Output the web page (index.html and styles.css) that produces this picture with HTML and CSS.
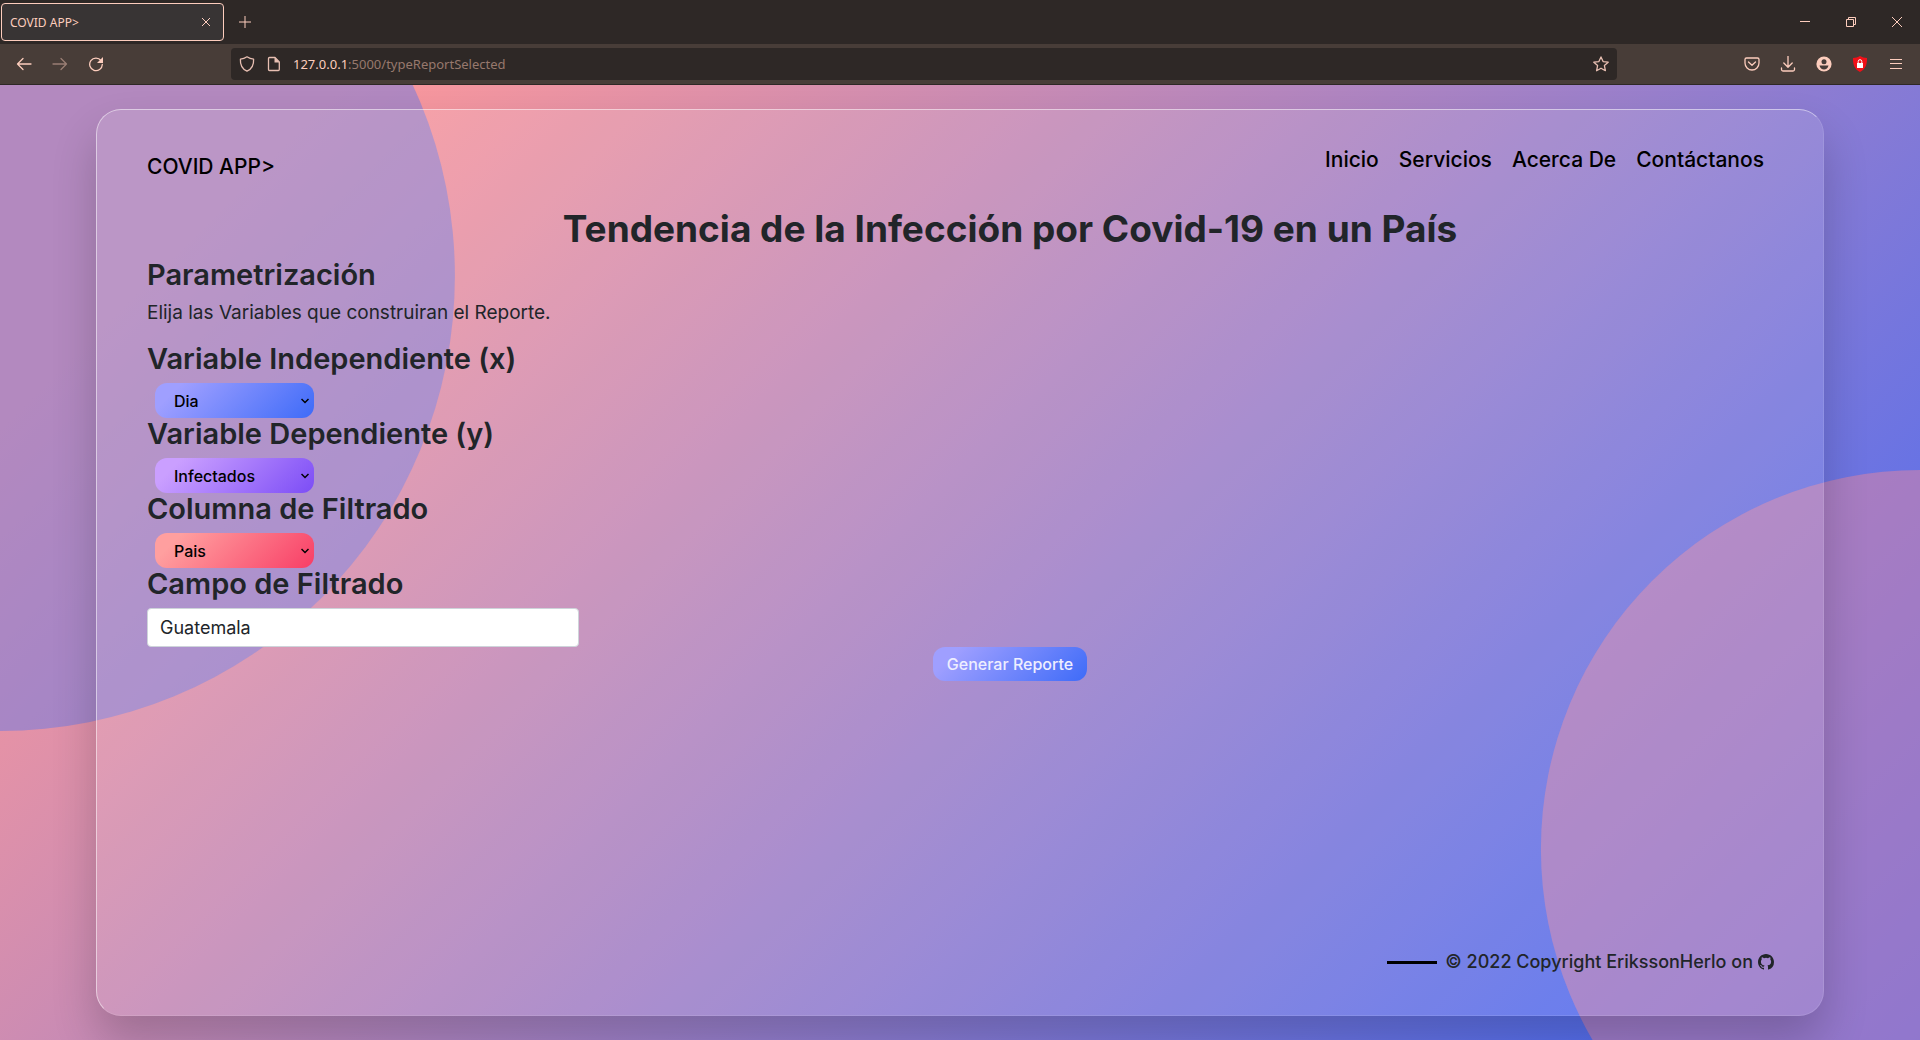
FILE: index.html
```html
<!DOCTYPE html>
<html lang="es">
<head>
<meta charset="utf-8">
<meta name="viewport" content="width=device-width, initial-scale=1">
<title>COVID APP&gt;</title>
<link rel="stylesheet" href="styles.css">
</head>
<body>
<div class="tabbar">
  <div class="tab">
    <span class="tab-title">COVID APP&gt;</span>
    <button class="icon-btn" aria-label="Cerrar pestaña"><svg width="10" height="10" viewBox="0 0 10 10"><path d="M1 1l8 8M9 1l-8 8"/></svg></button>
  </div>
  <button class="icon-btn new-tab" aria-label="Nueva pestaña"><svg width="12" height="12" viewBox="0 0 12 12"><path d="M6 0v12M0 6h12"/></svg></button>
  <div class="window-controls">
    <button class="icon-btn" aria-label="Minimizar"><svg width="10" height="10" viewBox="0 0 10 10"><path d="M0 4.500h10"/></svg></button>
    <button class="icon-btn" aria-label="Restaurar"><svg width="10" height="10" viewBox="0 0 10 10"><path d="M.5 2.500h7v7h-7zM2.500 2.500v-2h7v7h-2"/></svg></button>
    <button class="icon-btn" aria-label="Cerrar"><svg width="10" height="10" viewBox="0 0 10 10"><path d="M0 0l10 10M10 0L0 10"/></svg></button>
  </div>
</div>
<div class="toolbar">
  <div class="nav-buttons">
    <button class="icon-btn" aria-label="Atrás"><svg width="16" height="16" viewBox="0 0 16 16"><path class="thick" d="M15 8H1.500M7 2.500L1.500 8 7 13.500"/></svg></button>
    <button class="icon-btn dim" aria-label="Adelante"><svg width="16" height="16" viewBox="0 0 16 16"><path class="thick" d="M1 8h13.500M9 2.500L14.500 8 9 13.500"/></svg></button>
    <button class="icon-btn" aria-label="Recargar"><svg width="16" height="16" viewBox="0 0 16 16"><path class="thick" d="M13 4.500A6.300 6.300 0 1 0 14.300 8.500"/><path class="solid" d="M15 1v6H9z"/></svg></button>
  </div>
  <div class="urlbar">
    <svg width="16" height="16" viewBox="0 0 16 16"><path class="thick" d="M8 .8C10 2.200 12.300 3 14.600 3.200 14.900 8.500 13.200 12.800 8 15.200 2.800 12.800 1.100 8.500 1.400 3.200 3.700 3 6 2.200 8 .8z"/></svg>
    <svg class="doc" width="16" height="16" viewBox="0 0 16 16"><path class="thick" d="M3.500 1.500H9L13.300 6v7.500a1 1 0 0 1-1 1h-8.800a1 1 0 0 1-1-1v-11a1 1 0 0 1 1-1z"/><path class="solid" d="M8.500 1l5 5.500h-5z"/></svg>
    <span class="url"><span class="host">127.0.0.1</span>:5000/typeReportSelected</span>
    <svg width="16" height="16" viewBox="0 0 16 16"><path class="thick" d="M8 .9l2.100 4.700 5.100.6-3.800 3.400 1 5.100L8 12.200l-4.400 2.500 1-5.100L.8 6.200l5.100-.6z"/></svg>
  </div>
  <div class="tools">
    <button class="icon-btn" aria-label="Pocket"><svg width="16" height="16" viewBox="0 0 16 16"><path class="thick" d="M2.500 2h11a1.500 1.500 0 0 1 1.500 1.500V7A7 7 0 0 1 1 7V3.500A1.500 1.500 0 0 1 2.500 2zM4.500 6L8 9.200 11.500 6"/></svg></button>
    <button class="icon-btn" aria-label="Descargas"><svg width="16" height="16" viewBox="0 0 16 16"><path class="thick" d="M8 0v11M3.800 7L8 11.200 12.200 7M1.500 12v1.500a1.500 1.500 0 0 0 1.500 1.500h10a1.500 1.500 0 0 0 1.500-1.500V12"/></svg></button>
    <button class="icon-btn" aria-label="Cuenta"><svg width="16" height="16" viewBox="0 0 16 16"><circle class="solid" cx="8" cy="8" r="7.600"/><circle class="hole" cx="8" cy="5.700" r="2.500"/><path class="hole" d="M3.500 9.500h9c-.5 2.500-2.400 3.900-4.500 3.900s-4-1.400-4.500-3.900z"/></svg></button>
    <button class="icon-btn" aria-label="Bloqueador"><svg width="16" height="16" viewBox="0 0 16 16"><path fill="#f01018" d="M8 0c2 1.300 4.600 1.800 7 2 .2 6-1.200 11-7 14C2.200 13 .8 8 1 2c2.400-.2 5-.7 7-2z"/><path fill="#fff" d="M5 7h6v5H5z"/><path class="lock" d="M6.200 7V5.500a1.800 1.800 0 0 1 3.600 0V7"/></svg></button>
    <button class="icon-btn" aria-label="Menú"><svg width="16" height="16" viewBox="0 0 16 16"><path d="M2 3.500h12M2 7.500h12M2 12.500h12"/></svg></button>
  </div>
</div>
<main class="page">
  <section class="card">
    <header class="header">
      <a class="brand" href="#">COVID APP&gt;</a>
      <nav class="menu">
        <a href="#">Inicio</a>
        <a href="#">Servicios</a>
        <a href="#">Acerca De</a>
        <a href="#">Contáctanos</a>
      </nav>
    </header>
    <form class="report">
      <h1>Tendencia de la Infección por Covid-19 en un País</h1>
      <h2>Parametrización</h2>
      <p>Elija las Variables que construiran el Reporte.</p>
      <h2><label for="x">Variable Independiente (x)</label></h2>
      <div class="select blue">
        <select id="x"><option>Dia</option></select>
        <svg width="8" height="6" viewBox="0 0 8 6"><path d="M.5 1L4 4.500 7.500 1"/></svg>
      </div>
      <h2><label for="y">Variable Dependiente (y)</label></h2>
      <div class="select purple">
        <select id="y"><option>Infectados</option></select>
        <svg width="8" height="6" viewBox="0 0 8 6"><path d="M.5 1L4 4.500 7.500 1"/></svg>
      </div>
      <h2><label for="column">Columna de Filtrado</label></h2>
      <div class="select red">
        <select id="column"><option>Pais</option></select>
        <svg width="8" height="6" viewBox="0 0 8 6"><path d="M.5 1L4 4.500 7.500 1"/></svg>
      </div>
      <h2><label for="field">Campo de Filtrado</label></h2>
      <input class="field" id="field" type="text" value="Guatemala">
      <button class="submit blue" type="button">Generar Reporte</button>
    </form>
    <footer class="footer">
      <span class="rule"></span>
      <span>© 2022 Copyright ErikssonHerlo on</span>
      <a href="#" aria-label="GitHub"><svg width="16" height="16" viewBox="0 0 16 16"><path d="M8 0C3.580 0 0 3.580 0 8c0 3.540 2.290 6.530 5.470 7.590.4.070.55-.17.55-.38 0-.19-.01-.82-.01-1.490-2.010.37-2.530-.49-2.690-.94-.09-.23-.48-.94-.82-1.130-.28-.15-.68-.52-.01-.53.63-.01 1.080.58 1.230.82.72 1.210 1.870.87 2.330.66.070-.52.28-.87.51-1.070-1.780-.2-3.640-.89-3.640-3.950 0-.87.31-1.590.82-2.150-.08-.2-.36-1.020.08-2.120 0 0 .67-.21 2.200.82a7.600 7.600 0 0 1 4 0c1.530-1.040 2.200-.82 2.200-.82.44 1.100.16 1.920.08 2.120.51.56.82 1.270.82 2.150 0 3.070-1.870 3.750-3.650 3.950.29.25.54.73.54 1.480 0 1.070-.01 1.930-.01 2.200 0 .21.15.46.55.38A8 8 0 0 0 16 8c0-4.420-3.580-8-8-8z"/></svg></a>
    </footer>
  </section>
</main>
</body>
</html>
```
FILE: styles.css
```css
* { box-sizing: border-box; }

body {
  margin: 0;
  min-height: 100vh;
  display: flex;
  flex-direction: column;
  font-family: Inter, sans-serif;
  color: #212529;
}

button, input, select { font: inherit; }
a { color: inherit; text-decoration: none; }

/* Browser chrome */
.tabbar, .toolbar {
  display: flex;
  align-items: center;
  color: #fdcdbd;
  font-family: "Noto Sans", sans-serif;
}
.tabbar svg, .toolbar svg { display: block; fill: none; stroke: currentColor; stroke-width: 1; flex: none; }
.tabbar { height: 44px; background: #2e2826; padding: 0 18px 0 1px; }
.tab {
  width: 223px;
  height: 38px;
  padding: 0 12px 0 8px;
  display: flex;
  align-items: center;
  justify-content: space-between;
  border: 1px solid #fdcdbd;
  border-radius: 4px;
  background: #383434;
  font-size: 12px;
}
.icon-btn { border: 0; padding: 0; background: none; color: inherit; display: block; }
.new-tab { margin-left: 15px; }
.window-controls { margin-left: auto; display: flex; gap: 36px; }
.toolbar {
  height: 41px;
  padding: 0 16px;
  background: #483d38;
  border-bottom: 1px solid #2e2826;
}
.toolbar .thick { stroke-width: 1.300; stroke-linecap: round; stroke-linejoin: round; }
.toolbar .solid { fill: currentColor; stroke: none; }
.toolbar .hole { fill: #483d38; stroke: none; }
.toolbar .lock { stroke: #fff; }
.toolbar path[fill] { stroke: none; }
.nav-buttons { display: flex; gap: 20px; }
.dim { opacity: .45; }
.urlbar {
  flex: 1;
  height: 32px;
  margin: 0 127px;
  padding: 0 8px;
  display: flex;
  align-items: center;
  gap: 11px;
  border-radius: 4px;
  background: #2e2826;
  color: #e8bfb2;
  font-size: 13px;
}
.url { flex: 1; color: #97786d; }
.host { color: #fdcdbd; }
.tools { display: flex; align-items: center; gap: 20px; }

/* Page */
.page {
  position: relative;
  flex: 1;
  display: flex;
  padding: 24px 5%;
  background: linear-gradient(135deg, #fc989b 12%, #3d68f9);
}
.page::before, .page::after {
  content: "";
  position: absolute;
  inset: 0;
  opacity: .5;
}
.page::before {
  background: #6a79e4;
  clip-path: circle(30% at left 20%);
}
.page::after {
  background: #e486a2;
  clip-path: circle(25% at right 80%);
}
.card {
  position: relative;
  z-index: 1;
  flex: 1;
  display: flex;
  flex-direction: column;
  padding-left: 50px;
  border: 1px solid rgba(255, 255, 255, .5);
  border-right-color: rgba(255, 255, 255, .1);
  border-bottom-color: rgba(255, 255, 255, .1);
  border-radius: 25px;
  background: rgba(255, 255, 255, .11);
  box-shadow: 0 25px 45px rgba(0, 0, 0, .2);
}
.header {
  display: flex;
  justify-content: space-between;
  align-items: flex-start;
  height: 97px;
  padding: 36px 59px 0 0;
  color: #000;
  font-weight: 500;
}
.brand { font-size: 21px; line-height: 42px; }
.menu { display: flex; gap: 20px; font-size: 21px; line-height: 28px; }
.report { display: flex; flex-direction: column; align-items: flex-start; margin-right: -50px; }
.report h1 { align-self: center; margin: 0 0 8px; font-size: 37px; line-height: 44px; font-weight: 700; }
.report h2 { margin: 0 0 8px; font-size: 29px; line-height: 32px; font-weight: 600; }
.report p { margin: 0 0 16px; font-size: 19px; line-height: 28px; }
.blue { background: linear-gradient(135deg, #9f9fff 14%, #3e6bf8); }
.purple { background: linear-gradient(135deg, #ca9fff 14%, #7c4df6); }
.red { background: linear-gradient(135deg, #ff9f9f 14%, #f83e66); }
.select {
  display: grid;
  align-items: center;
  width: 159px;
  height: 35px;
  margin-left: 8px;
  border-radius: 12px;
}
.select select, .select svg { grid-area: 1 / 1; }
.select select {
  appearance: none;
  width: 100%;
  height: 35px;
  padding: 0 19px;
  border: 0;
  background: none;
  color: #000;
  font-size: 16px;
  font-weight: 500;
}
.select svg { justify-self: end; margin-right: 5px; fill: none; stroke: #000; stroke-width: 1.500; pointer-events: none; }
.field {
  width: 25%;
  height: 39px;
  padding: 0 12px;
  border: 1px solid #ced4da;
  border-radius: 4px;
  background: #fff;
  color: #212529;
  font-size: 18px;
}
.submit {
  align-self: center;
  height: 34px;
  padding: 0 14px;
  border: 0;
  border-radius: 12px;
  color: #eef;
  font-size: 16px;
  font-weight: 500;
}
.footer {
  display: flex;
  align-items: center;
  justify-content: flex-end;
  margin-top: auto;
  padding: 0 49px 39px 0;
  font-size: 18px;
  line-height: 28px;
  font-weight: 500;
}
.footer .rule { width: 50px; height: 3px; margin-right: 8px; background: #000; }
.footer a { margin-left: 5px; }
.footer svg { display: block; fill: #212529; }
```
